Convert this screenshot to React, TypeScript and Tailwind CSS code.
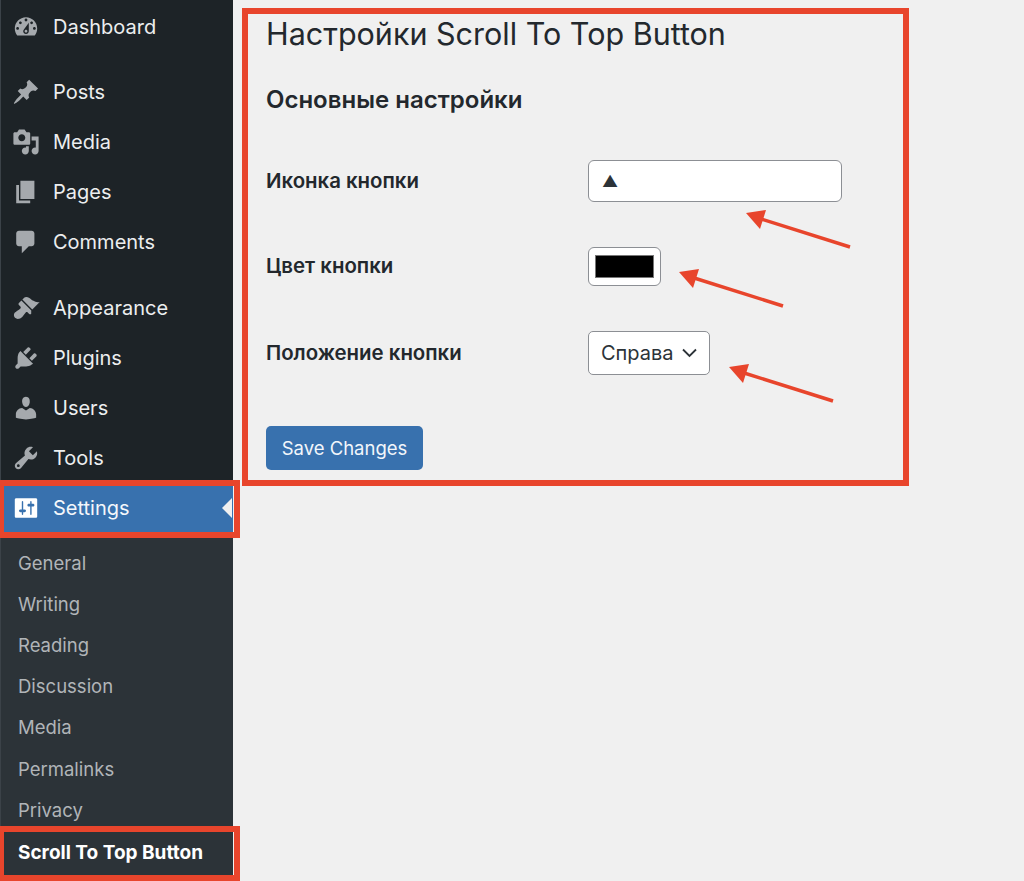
const icons = {
  dashboard: "M3.76 16h12.48c1.1-1.37 1.76-3.11 1.76-5 0-4.42-3.58-8-8-8s-8 3.58-8 8c0 1.89.66 3.63 1.76 5zM10 4c.55 0 1 .45 1 1s-.45 1-1 1-1-.45-1-1 .45-1 1-1zM6 6c.55 0 1 .45 1 1s-.45 1-1 1-1-.45-1-1 .45-1 1-1zm8 0c.55 0 1 .45 1 1s-.45 1-1 1-1-.45-1-1 .45-1 1-1zm-5.37 5.55L12 7v6c0 1.1-.9 2-2 2s-2-.9-2-2c0-.57.24-1.08.63-1.45zM4 10c.55 0 1 .45 1 1s-.45 1-1 1-1-.45-1-1 .45-1 1-1zm12 0c.55 0 1 .45 1 1s-.45 1-1 1-1-.45-1-1 .45-1 1-1zm-5 3c0-.55-.45-1-1-1s-1 .45-1 1 .45 1 1 1 1-.45 1-1z",
  posts: "M10.44 3.02l1.82-1.82 6.36 6.35-1.83 1.82c-1.05-.68-2.48-.57-3.41.36l-.75.75c-.92.93-1.04 2.35-.35 3.41l-1.83 1.82-2.41-2.41-2.8 2.79c-.42.42-3.38 2.71-3.8 2.29s1.86-3.39 2.28-3.81l2.79-2.79L4.1 9.36l1.83-1.82c1.05.69 2.48.57 3.4-.36l.75-.75c.93-.92 1.05-2.35.36-3.41z",
  media: "M13 11V4c0-.55-.45-1-1-1h-1.67L9 1H5L3.67 3H2c-.55 0-1 .45-1 1v7c0 .55.45 1 1 1h10c.55 0 1-.45 1-1zM7 4.5c1.38 0 2.5 1.12 2.5 2.5S8.38 9.5 7 9.5 4.5 8.38 4.5 7 5.62 4.5 7 4.5zM14 6h5v10.5c0 1.38-1.12 2.5-2.5 2.5S14 17.88 14 16.5s1.12-2.5 2.5-2.5c.17 0 .34.02.5.05V9h-3V6zm-4 8.05V13h2v3.5c0 1.38-1.12 2.5-2.5 2.5S7 17.88 7 16.5 8.12 14 9.5 14c.17 0 .34.02.5.05z",
  pages: "M6 15V2h10v13H6zm-1 1h8v2H3V5h2v11z",
  comments: "M5 2h9c1.1 0 2 .9 2 2v7c0 1.1-.9 2-2 2h-2l-5 5v-5H5c-1.1 0-2-.9-2-2V4c0-1.1.9-2 2-2z",
  appearance: "M14.48 11.06L7.41 3.99l1.5-1.5c.5-.56 2.3-.47 3.51.32 1.21.8 1.43 1.28 2.91 2.1 1.18.64 2.45 1.26 4.45.85zm-.71.71L6.7 4.7 4.93 6.47c-.39.39-.39 1.02 0 1.41l1.06 1.06c.39.39.39 1.03 0 1.42-.6.6-1.43 1.11-2.21 1.69-.35.26-.7.53-1.01.84C1.43 13.23.78 15.6 2.17 17s3.77.75 5.12-.6c.31-.31.58-.66.84-1.01.58-.78 1.09-1.61 1.69-2.21.39-.39 1.02-.39 1.41 0l1.06 1.06c.39.39 1.02.39 1.41 0z",
  plugins: "M13.11 4.36L9.87 7.6 8 5.73l3.24-3.24c.35-.34 1.05-.2 1.56.32.52.51.66 1.21.31 1.55zm-8 1.77l.91-1.12 9.01 9.01-1.19.84c-.71.71-2.63 1.16-3.82 1.16H6.14L4.9 17.26c-.59.59-1.54.59-2.12 0-.59-.58-.59-1.53 0-2.12l1.24-1.24v-3.88c0-1.13.4-3.19 1.09-3.89zm7.26 3.97l3.24-3.24c.34-.35 1.04-.21 1.55.31.52.51.66 1.21.31 1.55l-3.24 3.25z",
  users: "M10 9.25c-2.27 0-2.73-3.44-2.73-3.44C7 4.02 7.82 2 9.97 2c2.16 0 2.98 2.02 2.71 3.81 0 0-.41 3.44-2.68 3.44zm0 2.57L12.72 10c2.39 0 4.52 2.33 4.52 4.53v2.49s-3.65 1.13-7.24 1.13c-3.65 0-7.24-1.13-7.24-1.13v-2.49c0-2.25 1.94-4.48 4.47-4.48z",
  tools: "M16.68 9.77c-1.34 1.34-3.3 1.67-4.95.99l-5.41 6.52c-.99.99-2.59.99-3.58 0s-.99-2.59 0-3.57l6.52-5.42c-.68-1.65-.35-3.61.99-4.95 1.28-1.28 3.12-1.62 4.72-1.06l-2.89 2.89 2.82 2.82 2.86-2.87c.53 1.58.18 3.39-1.08 4.65zM3.81 16.21c.4.39 1.04.39 1.43 0 .4-.4.4-1.04 0-1.43-.39-.4-1.03-.4-1.43 0-.39.39-.39 1.03 0 1.43z",
  settings: "M18 16V4c0-.55-.45-1-1-1H3c-.55 0-1 .45-1 1v12c0 .55.45 1 1 1h14c.55 0 1-.45 1-1zM8 11h1c.55 0 1 .45 1 1s-.45 1-1 1H8v1.5c0 .28-.22.5-.5.5s-.5-.22-.5-.5V13H6c-.55 0-1-.45-1-1s.45-1 1-1h1V5.5c0-.28.22-.5.5-.5s.5.22.5.5V11zm5-2h-1c-.55 0-1-.45-1-1s.45-1 1-1h1V5.5c0-.28.22-.5.5-.5s.5.22.5.5V7h1c.55 0 1 .45 1 1s-.45 1-1 1h-1v5.5c0 .28-.22.5-.5.5s-.5-.22-.5-.5V9z",
};

function MenuItem({ icon, label, active }: { icon: keyof typeof icons; label: string; active?: boolean }) {
  return (
    <a className={active ? "relative flex h-[50px] items-center bg-[#3871ae] pl-[11px] text-[#f4f7fb]" : "flex h-[50px] items-center pl-[11px] text-[#eceeef]"}>
      <svg viewBox="0 0 20 20" className={active ? "h-[28px] w-[28px] fill-white" : "h-[28px] w-[28px] fill-[#a5a9ad]"}>
        <path d={icons[icon]} />
      </svg>
      <span className="ml-[13px] text-[20px]">{label}</span>
      {active && <span className="absolute right-[1px] top-[15px] h-0 w-0 border-y-[10px] border-r-[10px] border-y-transparent border-r-[#f0f0f0]" />}
    </a>
  );
}

function Arrow({ x1, y1 }: { x1: number; y1: number }) {
  return (
    <g>
      <line x1={x1 + 12} y1={y1 + 5} x2={x1 + 104} y2={y1 + 34} stroke="#e8452c" strokeWidth="3.5" />
      <polygon points={`${x1},${y1} ${x1 + 20},${y1 - 3} ${x1 + 14},${y1 + 16}`} fill="#e8452c" />
    </g>
  );
}

const submenu = ["General", "Writing", "Reading", "Discussion", "Media", "Permalinks", "Privacy"];

export default function App() {
  return (
    <div className="relative flex h-[881px] w-[1024px] overflow-hidden bg-[#f0f0f0] font-['Inter','Liberation_Sans',sans-serif]">
      <aside className="flex w-[233px] shrink-0 flex-col border-l border-[#3b4248] bg-[#1d2327] pt-[2px]">
        <MenuItem icon="dashboard" label="Dashboard" />
        <div className="mt-[15px]">
          <MenuItem icon="posts" label="Posts" />
          <MenuItem icon="media" label="Media" />
          <MenuItem icon="pages" label="Pages" />
          <MenuItem icon="comments" label="Comments" />
        </div>
        <div className="mt-[16px]">
          <MenuItem icon="appearance" label="Appearance" />
          <MenuItem icon="plugins" label="Plugins" />
          <MenuItem icon="users" label="Users" />
          <MenuItem icon="tools" label="Tools" />
          <MenuItem icon="settings" label="Settings" active />
        </div>
        <nav className="flex flex-1 flex-col bg-[#2c3338] pl-[17px] pt-[10px]">
          {submenu.map((item) => (
            <a key={item} className="flex h-[41.2px] items-center text-[18.5px] text-[#b1b5b8]">
              {item}
            </a>
          ))}
          <a className="flex h-[43px] items-center text-[19px] font-bold text-white">Scroll To Top Button</a>
        </nav>
      </aside>

      <main className="flex-1 pl-[33px] text-[#23282d]">
        <h1 className="mt-[14px] text-[30.5px] leading-[40px]">Настройки Scroll To Top Button</h1>
        <h2 className="mt-[31px] text-[24px] font-semibold leading-[30px]">Основные настройки</h2>
        <form>
          <div className="mt-[45px] grid grid-cols-[322px_1fr] items-center gap-y-[45px] text-[20.4px] font-semibold">
            <label>Иконка кнопки</label>
            <input
              readOnly
              value="▲"
              className="h-[42px] w-[254px] rounded-[6px] border border-[#8c8f94] bg-white px-[13px] text-[16px] font-normal text-[#2c3338]"
            />
            <label>Цвет кнопки</label>
            <input
              readOnly
              type="color"
              value="#000000"
              className="h-[39px] w-[73px] rounded-[6px] border border-[#8c8f94] bg-white px-[6px] py-[7px] [&::-webkit-color-swatch-wrapper]:p-0 [&::-webkit-color-swatch]:rounded-none"
            />
            <label>Положение кнопки</label>
            <div className="relative w-[122px]">
              <select className="h-[44px] w-full appearance-none rounded-[5px] border border-[#8c8f94] bg-white pl-[12px] text-[20px] font-normal text-[#2c3338]">
                <option>Справа</option>
              </select>
              <svg viewBox="0 0 16 10" className="pointer-events-none absolute right-[12px] top-[17px] h-[10px] w-[17px]">
                <path d="M1.5 1.5L8 8l6.5-6.5" fill="none" stroke="#2c3338" strokeWidth="1.8" />
              </svg>
            </div>
          </div>
          <button type="button" className="mt-[51px] h-[44px] w-[157px] rounded-[5px] bg-[#3871ae] pt-[2px] text-[18.5px] text-[#f2f6fb]">
            Save Changes
          </button>
        </form>
      </main>

      {/* annotations on top of the screenshot */}
      <div className="pointer-events-none absolute left-[242px] top-[8px] h-[478px] w-[667px] border-[6px] border-[#e8452c]" />
      <div className="pointer-events-none absolute left-[-2px] top-[480px] h-[58px] w-[242px] border-[6px] border-[#e8452c]" />
      <div className="pointer-events-none absolute left-[-2px] top-[826px] h-[55px] w-[242px] border-[6px] border-[#e8452c]" />
      <svg className="pointer-events-none absolute inset-0 h-[881px] w-[1024px]">
        <Arrow x1={746} y1={213} />
        <Arrow x1={679} y1={272} />
        <Arrow x1={729} y1={367} />
      </svg>
    </div>
  );
}
